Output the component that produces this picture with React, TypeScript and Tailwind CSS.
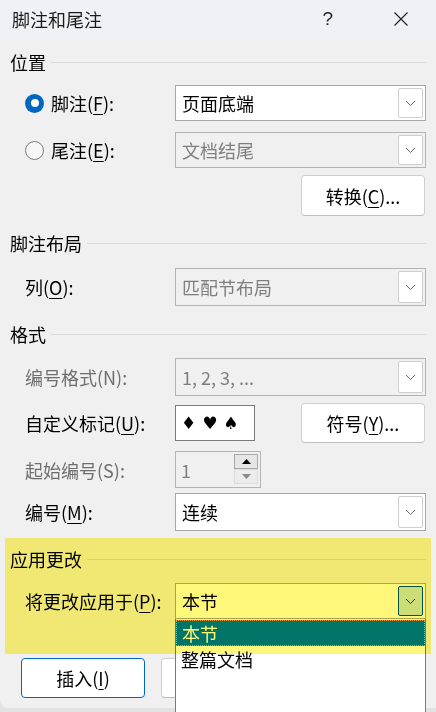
import React from "react";

const FONT = "font-['Noto_Sans_CJK_SC','Noto_Sans',sans-serif]";

function Acc({ text, k, after = "):" }: { text: string; k: string; after?: string }) {
  return (
    <span>
      {text}(<span className="underline underline-offset-[3px] decoration-1">{k}</span>
      {after}
    </span>
  );
}

function Chevron({ color = "#666666" }: { color?: string }) {
  return (
    <svg width="11" height="7" viewBox="0 0 11 7">
      <path d="M1 1 L5.5 5.5 L10 1" fill="none" stroke={color} strokeWidth="1" />
    </svg>
  );
}

function Header({ title }: { title: string }) {
  return (
    <div className="h-[24px] flex items-center">
      <span className="text-[18px] leading-[24px] text-black">{title}</span>
      <div className="flex-1 h-px bg-[#d9d9d9] ml-[5px]" />
    </div>
  );
}

function Select({
  value,
  disabled = false,
  h = "h-[36px]",
  active = false,
}: {
  value: string;
  disabled?: boolean;
  h?: string;
  active?: boolean;
}) {
  return (
    <div
      className={`w-[251px] ${h} border flex items-stretch p-[2px] ${
        disabled ? "bg-[#f0f0f0] border-[#b4b4b4]" : "bg-white border-[#a8a8a8]"
      }`}
    >
      <div
        className={`flex-1 flex items-center pl-[4px] text-[18px] leading-none ${
          disabled ? "text-[#7e7e7e]" : "text-black"
        }`}
      >
        {value}
      </div>
      <div
        className={`w-[25px] flex items-center justify-center rounded-[2px] border ${
          active ? "bg-[#cce4f7] border-[#005499]" : "bg-white border-[#cfcfcf]"
        }`}
      >
        <Chevron color={active ? "#333333" : "#6a6a6a"} />
      </div>
    </div>
  );
}

function Row({ children, label, grey = false, h = "h-[36px]", mt }: { children: React.ReactNode; label: React.ReactNode; grey?: boolean; h?: string; mt: string }) {
  return (
    <div className={`${mt} ${h} flex items-center`}>
      <div className={`w-[165px] pl-[15px] text-[18px] leading-none ${grey ? "text-[#6e6e6e]" : "text-black"}`}>{label}</div>
      {children}
    </div>
  );
}

function Radio({ checked }: { checked: boolean }) {
  return checked ? (
    <div className="w-[19px] h-[19px] rounded-full bg-[#0067c0] flex items-center justify-center">
      <div className="w-[8px] h-[8px] rounded-full bg-white" />
    </div>
  ) : (
    <div className="w-[19px] h-[19px] rounded-full border border-[#7c7c7c] bg-[#f7f7f7]" />
  );
}

function Button({ children, primary = false, className = "" }: { children?: React.ReactNode; primary?: boolean; className?: string }) {
  return (
    <div
      className={`w-[124px] h-[40px] rounded-[4px] bg-white flex items-center justify-center text-[18px] leading-none text-black border ${
        primary ? "border-[#0067c0]" : "border-[#d0d0d0] border-b-[#bdbdbd]"
      } ${className}`}
    >
      {children}
    </div>
  );
}

export default function App() {
  return (
    <div className={`relative w-[436px] h-[712px] bg-[#e2e2e2] overflow-hidden ${FONT}`}>
      <div className="h-[708px] bg-[#f0f0f0] rounded-bl-[8px] flex flex-col">
        {/* Title bar */}
        <div className="h-[37px] bg-[#eef2f7] flex items-center pl-[12px] shrink-0">
          <span className="text-[18px] leading-none text-[#1b1b1b]">脚注和尾注</span>
          <span className="ml-auto text-[19px] leading-none text-[#222] font-light mr-[60px] font-['Liberation_Sans',sans-serif]">?</span>
          <svg width="16" height="16" viewBox="0 0 16 16" className="mr-[27px]">
            <path d="M1.5 1.5 L14.5 14.5 M14.5 1.5 L1.5 14.5" stroke="#222" strokeWidth="1.2" />
          </svg>
        </div>

        <div className="flex flex-col pl-[10px] pr-[10px]">
          <div className="mt-[13px]">
            <Header title="位置" />
          </div>

          <div className="mt-[11px] h-[36px] flex items-center">
            <div className="w-[165px] pl-[15px] flex items-center gap-[7px] text-[18px] leading-none text-black">
              <Radio checked />
              <Acc text="脚注" k="F" />
            </div>
            <Select value="页面底端" />
          </div>

          <div className="mt-[11px] h-[36px] flex items-center">
            <div className="w-[165px] pl-[15px] flex items-center gap-[7px] text-[18px] leading-none text-black">
              <Radio checked={false} />
              <Acc text="尾注" k="E" />
            </div>
            <Select value="文档结尾" disabled />
          </div>

          <div className="mt-[7px] flex justify-end pr-[1px]">
            <Button className="h-[41px]">
              <Acc text="转换" k="C" after=")..." />
            </Button>
          </div>

          <div className="mt-[15px]">
            <Header title="脚注布局" />
          </div>

          <Row mt="mt-[13px]" h="h-[38px]" label={<Acc text="列" k="O" />}>
            <Select value="匹配节布局" disabled h="h-[38px]" />
          </Row>

          <div className="mt-[16px]">
            <Header title="格式" />
          </div>

          <Row mt="mt-[12px]" h="h-[38px]" grey label="编号格式(N):">
            <Select value="1, 2, 3, ..." disabled h="h-[38px]" />
          </Row>

          <Row mt="mt-[7px]" h="h-[40px]" label={<Acc text="自定义标记" k="U" />}>
            <div className="w-[80px] h-[36px] bg-white border border-[#7a7a7a] flex items-center pl-[5px] text-[17px] leading-none text-black font-bold font-['DejaVu_Sans',sans-serif]">
              ♦ ♥ ♠
            </div>
            <Button className="ml-auto mr-[1px]">
              <Acc text="符号" k="Y" after=")..." />
            </Button>
          </Row>

          <Row mt="mt-[8px]" h="h-[37px]" grey label="起始编号(S):">
            <div className="w-[86px] h-[37px] border border-[#b4b4b4] bg-[#f0f0f0] flex items-stretch p-[2px]">
              <div className="flex-1 flex items-center pl-[3px] text-[18px] leading-none text-[#7e7e7e]">1</div>
              <div className="w-[24px] flex flex-col">
                <div className="h-[15px] border border-[#a8a8a8] bg-[#e6e6e6] flex items-center justify-center">
                  <svg width="9" height="5" viewBox="0 0 9 5">
                    <path d="M0 5 L4.5 0 L9 5 Z" fill="#000" />
                  </svg>
                </div>
                <div className="h-[15px] border border-[#dcdcdc] bg-[#ececec] flex items-center justify-center">
                  <svg width="9" height="5" viewBox="0 0 9 5">
                    <path d="M0 0 L4.5 5 L9 0 Z" fill="#8a8a8a" />
                  </svg>
                </div>
              </div>
            </div>
          </Row>

          <Row mt="mt-[5px]" h="h-[38px]" label={<Acc text="编号" k="M" />}>
            <Select value="连续" h="h-[38px]" />
          </Row>

          <div className="mt-[16px]">
            <Header title="应用更改" />
          </div>

          <Row mt="mt-[12px]" h="h-[36px]" label={<Acc text="将更改应用于" k="P" />}>
            <Select value="本节" active />
          </Row>

          <div className="mt-[39px] flex gap-[16px] pl-[11px]">
            <Button primary>
              <Acc text="插入" k="I" after=")" />
            </Button>
            {/* second button sits under the open list */}
            <Button />
          </div>
        </div>
      </div>

      {/* Dropdown list */}
      <div className="absolute left-[175px] top-[619px] w-[251px] bottom-0 bg-white border-x border-[#7a7a7a] z-10 text-[18px] leading-none">
        <div className="h-[26px] mt-[1px] bg-[#0078d4] border border-dotted border-[#f0a050] text-white flex items-center pl-[5px]">
          本节
        </div>
        <div className="h-[26px] flex items-center pl-[5px] text-black">整篇文档</div>
      </div>

      {/* Highlight */}
      <div className="absolute left-[5px] top-[538px] w-[426px] h-[116px] bg-[#fff77a] mix-blend-multiply pointer-events-none z-20" />
    </div>
  );
}
